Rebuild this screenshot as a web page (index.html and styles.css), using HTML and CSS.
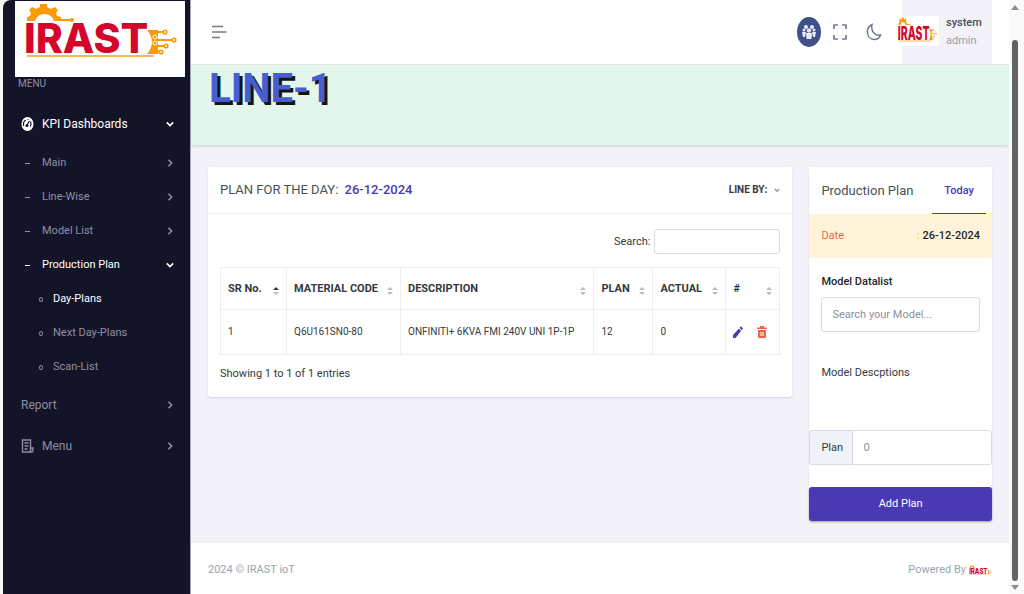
FILE: index.html
```
<!DOCTYPE html>
<html lang="en">
<head>
<meta charset="utf-8">
<title>Line-1 | IRAST ioT</title>
<meta name="viewport" content="width=device-width, initial-scale=1">
<link rel="stylesheet" href="styles.css">
</head>
<body>

<!-- shared icons -->
<svg class="defs" width="0" height="0" aria-hidden="true">
  <symbol id="irast" viewBox="0 0 170 76">
    <rect width="170" height="76" fill="#fff"/>
    <path fill="#fb9a06" d="M12 20v-4l3-1 1-3-2-3 3-3 4 2 4-2v-3h7v3l4 2 4-2 3 3-2 3 1 3 4 1v2h10v2H39a10 10 0 0 0-19 0z"/>
    <circle cx="57" cy="19" r="2" fill="#fb9a06"/>
    <text x="9" y="52" class="logo-text">IRAST</text>
    <path fill="#fbb85a" d="M12 54h127v2H12z"/>
    <path fill="#fb9a06" d="M132 29h11v24h-11q10-12 0-24z"/>
    <g fill="none" stroke="#fb9a06" stroke-width="1.600">
      <path stroke-width="2" d="M140 31h8M141 39h16M141 45h8M138 50h6"/>
      <circle cx="150" cy="31" r="1.800" fill="#fff"/><circle cx="159" cy="39" r="1.800" fill="#fff"/>
      <circle cx="151" cy="45" r="1.800" fill="#fff"/><circle cx="146" cy="51" r="1.800" fill="#fff"/>
    </g>
    <g fill="#fb9a06" stroke="#fff"><circle cx="140" cy="36" r="2"/><circle cx="140" cy="42" r="2"/></g>
  </symbol>
  <symbol id="right" viewBox="0 0 10 10"><path d="M3 1l4 4-4 4" fill="none" stroke="currentColor" stroke-width="2"/></symbol>
  <symbol id="down" viewBox="0 0 10 10"><path d="M1 3l4 4 4-4" fill="none" stroke="currentColor" stroke-width="2"/></symbol>
  <symbol id="sort" viewBox="0 0 6 10"><path fill="currentColor" d="M0 4l3-3 3 3z"/><path fill="#b9bcc4" d="M0 6l3 3 3-3z"/></symbol>
</svg>

<div class="window">
  <aside class="sidebar">
    <a class="brand" href="#"><svg role="img" aria-label="IRAST"><use href="#irast"/></svg></a>
    <div class="menu-title">MENU</div>
    <nav>
      <a class="item active" href="#">
        <svg class="item-icon" viewBox="0 0 12 14"><ellipse cx="6" cy="7" rx="6" ry="7" fill="currentColor"/><path d="M2.200 9a4 5 0 0 1 2-6M6 2.500h1M9 4.500a5 6 0 0 1 0 5M5 9l3-5" stroke="#141428" stroke-width="1.200" fill="none"/><circle cx="5.500" cy="8.500" r="1.500" fill="#141428"/></svg>
        <span>KPI Dashboards</span><svg class="arrow"><use href="#down"/></svg></a>
      <div class="submenu">
        <a class="sub" href="#"><i class="dash"></i><span>Main</span><svg class="arrow"><use href="#right"/></svg></a>
        <a class="sub" href="#"><i class="dash"></i><span>Line-Wise</span><svg class="arrow"><use href="#right"/></svg></a>
        <a class="sub" href="#"><i class="dash"></i><span>Model List</span><svg class="arrow"><use href="#right"/></svg></a>
        <a class="sub active" href="#"><i class="dash"></i><span>Production Plan</span><svg class="arrow"><use href="#down"/></svg></a>
        <a class="sub leaf active" href="#"><i class="dot"></i><span>Day-Plans</span></a>
        <a class="sub leaf" href="#"><i class="dot"></i><span>Next Day-Plans</span></a>
        <a class="sub leaf" href="#"><i class="dot"></i><span>Scan-List</span></a>
      </div>
      <a class="item" href="#"><span>Report</span><svg class="arrow"><use href="#right"/></svg></a>
      <a class="item" href="#">
        <svg class="item-icon" viewBox="0 0 12 14" fill="none" stroke="currentColor" stroke-width="1.400"><path d="M9 9V1H1v12h9M9 9h2.400v2.500a1.200 1.500 0 0 1-2.400 0zM3 4h4M3 7h4M3 10h3"/></svg>
        <span>Menu</span><svg class="arrow"><use href="#right"/></svg></a>
    </nav>
  </aside>

  <div class="page">
    <header class="topbar">
      <button class="icon-btn" type="button" aria-label="Toggle menu"><svg width="16" height="14" viewBox="0 0 16 14" stroke="currentColor" stroke-width="1.500"><path d="M1 1.500h11M1 7h14.500M1 12.500h8"/></svg></button>
      <div class="tools">
        <button class="group-btn" type="button" aria-label="Users"><svg width="14" height="16" viewBox="0 0 14 16" fill="#e6eaf5"><circle cx="4" cy="3" r="2"/><circle cx="10" cy="3" r="2"/><circle cx="2" cy="6" r="1.500"/><circle cx="12" cy="6" r="1.500"/><circle cx="7" cy="6.500" r="2.200"/><path d="M0 8h4l-1 5H1zM10 8h4l-1 5h-2zM4 9h6l-.500 6h-5z"/></svg></button>
        <button class="icon-btn" type="button" aria-label="Full screen"><svg width="14" height="16" viewBox="0 0 14 16" fill="none" stroke="currentColor" stroke-width="1.600"><path d="M1 5V1h4M9 1h4v4M13 11v4H9M5 15H1v-4"/></svg></button>
        <button class="icon-btn" type="button" aria-label="Dark mode"><svg width="16" height="18" viewBox="0 0 16 18" fill="none" stroke="currentColor" stroke-width="1.500"><path d="M6 1.500C3 3 1 6 1.500 10c.500 4 3.500 6.500 7 6.500 3 0 5-1.500 6-4.500-5 1-10-3-8.500-10.500z"/></svg></button>
        <a class="user" href="#">
          <svg class="avatar" viewBox="6 0 164 66" preserveAspectRatio="none" role="img" aria-label="IRAST"><use href="#irast" width="170" height="76"/></svg>
          <span><b>system</b><small>admin</small></span>
        </a>
      </div>
    </header>

    <div class="banner"><h1>LINE-1</h1></div>

    <main class="content">
      <section class="card">
        <div class="card-head">
          <h2>PLAN FOR THE DAY: <span class="day">26-12-2024</span></h2>
          <button class="line-by" type="button">LINE BY: <svg><use href="#down"/></svg></button>
        </div>
        <div class="card-body">
          <div class="search"><label for="search">Search:</label><input id="search" type="search"></div>
          <table>
            <colgroup><col class="c-sr"><col class="c-code"><col><col class="c-plan"><col class="c-actual"><col class="c-act"></colgroup>
            <thead>
              <tr>
                <th><div>SR No.<svg class="sort asc"><use href="#sort"/></svg></div></th>
                <th><div>MATERIAL CODE<svg class="sort"><use href="#sort"/></svg></div></th>
                <th><div>DESCRIPTION<svg class="sort"><use href="#sort"/></svg></div></th>
                <th><div>PLAN<svg class="sort"><use href="#sort"/></svg></div></th>
                <th><div>ACTUAL<svg class="sort"><use href="#sort"/></svg></div></th>
                <th><div>#<svg class="sort"><use href="#sort"/></svg></div></th>
              </tr>
            </thead>
            <tbody>
              <tr>
                <td>1</td>
                <td>Q6U161SN0-80</td>
                <td>ONFINITI+ 6KVA FMI 240V UNI 1P-1P</td>
                <td>12</td>
                <td>0</td>
                <td><div class="actions">
                  <a class="edit" href="#" aria-label="Edit"><svg width="10" height="12" viewBox="0 0 10 12" fill="currentColor"><path d="M0 12V9l6-6.500L8 5l-5.500 7zM6.700 1.800L8 .300l2 2-1.300 1.900z"/></svg></a>
                  <a class="delete" href="#" aria-label="Delete"><svg width="10" height="12" viewBox="0 0 10 12"><path fill="currentColor" d="M0 1.500h3V0h4v1.500h3V3H0zM1 4h8v8H1z"/><path d="M3 6h4v4H3z" fill="#fbb3a3"/></svg></a>
                </div></td>
              </tr>
            </tbody>
          </table>
          <p class="info">Showing 1 to 1 of 1 entries</p>
        </div>
      </section>

      <form class="card">
        <div class="card-head plan-head"><h2>Production Plan</h2><a class="tab" href="#">Today</a></div>
        <div class="date"><span>Date</span><span class="date-value"><i>:</i> 26-12-2024</span></div>
        <div class="model">
          <label for="model">Model Datalist</label>
          <input id="model" type="text" placeholder="Search your Model...">
          <p>Model Descptions</p>
        </div>
        <div class="qty"><label for="plan">Plan</label><input id="plan" type="text" placeholder="0"></div>
        <button class="add" type="button">Add Plan</button>
      </form>
    </main>

    <footer class="footer"><span>2024 © IRAST ioT</span><span class="powered">Powered By <svg viewBox="8 2 156 56" preserveAspectRatio="none" role="img" aria-label="IRAST"><use href="#irast" width="170" height="76"/></svg></span></footer>
  </div>

  <div class="scroll"><i class="scroll-up"></i><i class="thumb"></i><i class="scroll-down"></i></div>
</div>
</body>
</html>
```
FILE: styles.css
```
* { box-sizing: border-box; }
body { margin: 0; background: #fff; color: #343a40; font: 11px/16px Roboto, sans-serif; }
a { color: inherit; text-decoration: none; }
button, input { font: inherit; color: inherit; }
button { border: 0; background: none; padding: 0; }
h1, h2, p { margin: 0; font-weight: 400; }
svg { display: block; flex: none; }
.defs { position: absolute; }
.logo-text { font: 800 41px/1 Inter, sans-serif; fill: #d5062c; }

.window { display: flex; min-height: 100vh; padding-left: 3px; background: #f7f7f7; }

/* sidebar */
.sidebar { flex: none; width: 188px; padding: 1px 5px 0 12px; background: #141428; color: #8d8fa5; border-right: 1px solid #a9a9b4; border-top-left-radius: 8px; }
.brand svg { width: 170px; height: 76px; }
.menu-title { padding: 0 3px; font-size: 10px; line-height: 14px; }
.sidebar nav { padding: 12px 11px 0 6px; }
.item, .sub { display: flex; align-items: center; }
.item { height: 41px; font-size: 12px; }
.item-icon { width: 13px; height: 14px; margin-right: 8px; }
.submenu { padding-top: 2px; }
.sub { height: 34px; padding-left: 4px; }
.active { color: #fff; }
.arrow { width: 8px; height: 8px; margin-left: auto; }
.dash { width: 5px; height: 1px; margin-right: 12px; background: currentColor; }
.leaf { padding-left: 18px; }
.dot { width: 4px; height: 5px; margin-right: 10px; border: 1px solid #8d8fa5; border-radius: 50%; }

/* top bar */
.page { flex: 1; min-width: 0; display: flex; flex-direction: column; background: #f3f2f8; }
.topbar { display: flex; justify-content: space-between; align-items: center; height: 65px; padding: 0 17px 0 20px; background: #fff; border-bottom: 1px solid #ecedf2; }
.icon-btn { color: #74788d; }
.tools { display: flex; align-items: center; gap: 14px; height: 100%; }
.tools .icon-btn { width: 20px; }
.tools .icon-btn svg { margin: 0 auto; }
.group-btn { display: flex; align-items: center; justify-content: center; width: 24px; height: 30px; border-radius: 50%; background: #405189; margin-right: -5px; }
.user { display: flex; align-items: center; gap: 7px; width: 90px; height: 100%; margin-left: 4px; background: #f3f2f8; }
.avatar { width: 42px; height: 30px; margin: -2px 0 0 -5px; }
.user b, .user small { display: block; font-size: 11px; line-height: 18px; font-weight: 500; color: #495057; }
.user small { font-weight: 400; color: #9a9cab; }

.banner { height: 80px; padding-left: 18px; background: #e2f6eb; box-shadow: 0 1px 3px rgba(50, 50, 90, .2); }
.banner h1 { font-size: 40px; line-height: 48px; font-weight: 700; color: #465ed0; text-shadow: 3px 3px #151515; }

/* cards */
.content { display: grid; grid-template-columns: 16fr 5fr; gap: 17px; align-items: start; padding: 22px 17px; }
.card { background: #fff; border-radius: 3px; box-shadow: 0 1px 2px rgba(56, 65, 74, .15); min-width: 0; }
.card-head { display: flex; justify-content: space-between; align-items: center; height: 47px; padding: 0 12px; border-bottom: 1px solid #eef0f3; }
.card-head h2 { font-size: 13px; line-height: 20px; color: #495057; }
.day { margin-left: 3px; font-weight: 500; color: #4b38b3; }
.line-by { display: flex; align-items: center; gap: 7px; font-size: 10px; font-weight: 700; }
.line-by svg { width: 6px; height: 6px; color: #878a99; }
.card-body { padding: 15px 12px; }
.search { display: flex; justify-content: flex-end; align-items: center; gap: 4px; margin-bottom: 13px; }
input { border: 1px solid #d9dde3; border-radius: 3px; background: #fff; outline: 0; }
input::placeholder { color: #8d909e; opacity: 1; }
.search input { width: 126px; height: 25px; }

table { width: 100%; table-layout: fixed; border-collapse: collapse; white-space: nowrap; }
.c-sr { width: 66px; }
.c-code { width: 114px; }
.c-plan { width: 59px; }
.c-actual { width: 73px; }
.c-act { width: 54px; }
th, td { border: 1px solid #eceef1; padding: 0 7px; text-align: left; }
th { height: 42px; font-weight: 700; }
th div { display: flex; justify-content: space-between; align-items: center; }
td { height: 45px; font-size: 10px; }
.sort { width: 6px; height: 10px; margin-top: 4px; color: #b9bcc4; }
.asc { color: #343a40; }
.actions { display: flex; gap: 14px; }
.edit { color: #4b38b3; }
.delete { color: #f06548; }
.info { margin-top: 11px; }

/* plan form */
.plan-head { border: 0; padding-right: 6px; }
.tab { height: 47px; padding: 0 12px; line-height: 47px; font-weight: 500; color: #4b38b3; border-bottom: 1px solid #4b38b3; }
.date { display: flex; justify-content: space-between; align-items: center; height: 44px; padding: 0 12px; background: #fff4da; color: #f06548; }
.date-value { color: #212529; font-weight: 500; }
.date-value i { color: #f7b84b; font-style: normal; }
.model { padding: 16px 12px 0; }
.model label { display: block; margin-bottom: 7px; font-weight: 500; color: #212529; }
.model input { width: 100%; height: 35px; padding: 0 10px; }
.model p { margin-top: 33px; }
.qty { display: flex; height: 35px; margin: 49px 0 22px; }
.qty label { width: 43px; line-height: 33px; padding-left: 11px; background: #eff2f7; border: 1px solid #d9dde3; border-right: 0; border-radius: 3px 0 0 3px; }
.qty input { flex: 1; min-width: 0; padding: 0 10px; border-radius: 0 3px 3px 0; }
.add { display: block; width: 100%; height: 34px; border-radius: 3px; background: #4b38b3; color: #fff; box-shadow: 0 1px 2px rgba(30, 32, 37, .3); }

.footer { display: flex; justify-content: space-between; align-items: center; height: 51px; margin-top: auto; padding: 2px 17px 0; background: #fff; color: #98a6ad; }
.powered { display: flex; align-items: center; gap: 3px; }
.powered svg { width: 23px; height: 10px; }

/* scroll bar */
.scroll { display: flex; flex-direction: column; align-items: center; width: 15px; flex: none; padding: 5px 4px 0 0; background: #fafafa; }
.thumb { flex: 1; width: 6px; margin: 30px 0 4px; border-radius: 3px; background: #636363; }
.scroll-up, .scroll-down { border: 4px solid transparent; }
.scroll-up { border-top: 0; border-bottom: 5px solid #8b8b8b; }
.scroll-down { border-bottom: 4px solid transparent; border-top: 5px solid #8b8b8b; }
```
